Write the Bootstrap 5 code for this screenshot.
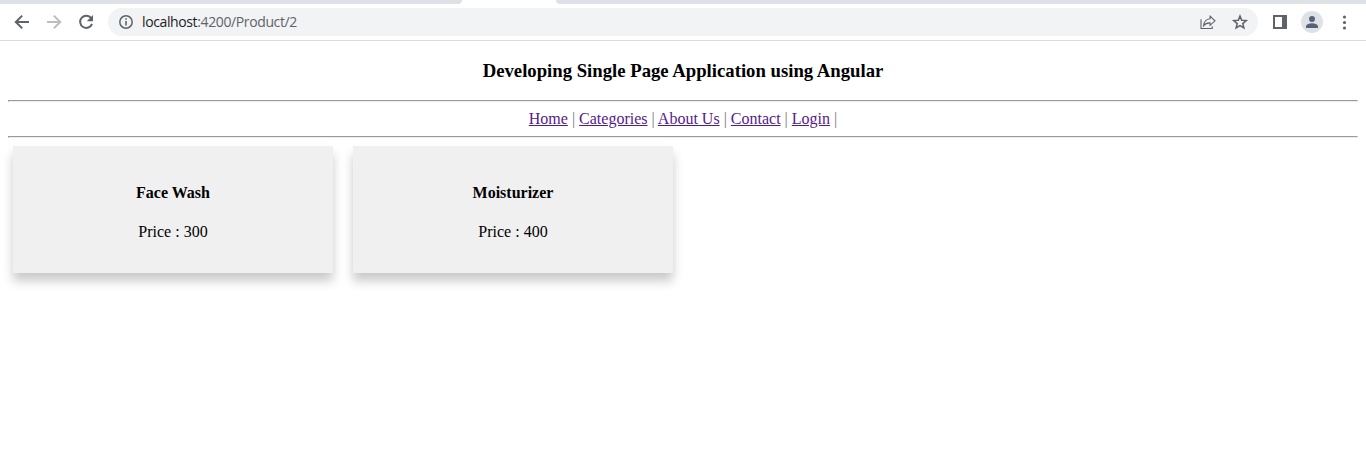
<!DOCTYPE html>
<html lang="en">
<head>
<meta charset="utf-8">
<meta name="viewport" content="width=device-width, initial-scale=1">
<title>Developing Single Page Application using Angular</title>
<link href="https://cdn.jsdelivr.net/npm/bootstrap@5.3.0/dist/css/bootstrap.min.css" rel="stylesheet">
<style>
  body { height: 460px; background: #fff; color: #000; font-family: "Liberation Serif", serif; font-size: 16px; line-height: 18px; }
  .tab-strip { height: 4px; }
  .tab-strip div { background: #dee1e6; }
  .tabs-before { width: 462px; border-bottom-right-radius: 4px; }
  .tabs-after { margin-left: 94px; border-bottom-left-radius: 4px; }
  .toolbar { height: 37px; border-bottom: 1px solid #dadce0; padding-left: 12px; padding-right: 12px; color: #5f6368; }
  .toolbar svg { display: block; flex: none; }
  .tool-nav { gap: 12px; width: 96px; }
  .address { height: 28px; width: 1150px; background: #f1f3f4; padding: 0 10px 0 8px; }
  .url { font: 14px/18px "Open Sans", sans-serif; letter-spacing: -.38px; color: #5f6368; margin-left: 6px; }
  .url span { color: #202124; }
  .star { margin: -2px; }
  .tool-end { margin-left: 12px; gap: 11px; }
  .page-body { padding: 0 8px; }
  .page-title { font-size: 18.72px; line-height: 21px; font-weight: 700; padding-top: 19px; margin: 0 0 19px; }
  .rule { height: 2px; border: 1px solid; border-color: #9a9a9a #eee #eee #9a9a9a; opacity: 1; margin: 0 0 8px; }
  .site-nav { height: 18px; margin-bottom: 8px; color: #777; }
  .site-nav a { color: #551a8b; }
  .products { gap: 20px; padding-left: 5px; }
  .product { width: 320px; height: 127px; padding: 38px 16px 16px; background: #f0f0f0; box-shadow: 0 8px 10px rgba(0,0,0,.21); }
  .product h4 { font-size: 16px; line-height: 18px; font-weight: 700; margin: 0 0 21px; }
</style>
</head>
<body class="overflow-hidden">
<header>
  <div class="tab-strip d-flex">
    <div class="tabs-before"></div>
    <div class="tabs-after flex-grow-1"></div>
  </div>
  <div class="toolbar d-flex align-items-center">
    <div class="tool-nav d-flex">
      <svg width="20" height="20" viewBox="0 0 20 20" fill="none" stroke="#5f6368" stroke-width="2"><path d="M17 10H4.5M10.2 3.6 3.8 10l6.4 6.4"/></svg>
      <svg width="20" height="20" viewBox="0 0 20 20" fill="none" stroke="#bbbdbf" stroke-width="2"><path d="M3 10h12.5M9.8 3.6l6.4 6.4-6.4 6.4"/></svg>
      <svg width="20" height="20" viewBox="0 0 20 20"><path d="M15.2 6.2A6.1 6.1 0 1 0 16 11.8" fill="none" stroke="#5f6368" stroke-width="2"/><path d="M17 3v6.2h-6.2z" fill="#5f6368"/></svg>
    </div>
    <div class="address rounded-pill d-flex align-items-center">
      <svg width="20" height="20" viewBox="0 0 20 20"><circle cx="10" cy="10" r="6.2" fill="none" stroke="#5f6368" stroke-width="1.5"/><path d="M9.2 6.2h1.6v1.6H9.2zM9.2 9.1h1.6v4.5H9.2z" fill="#5f6368"/></svg>
      <div class="url"><span>localhost</span>:4200/Product/2</div>
      <div class="d-flex ms-auto gap-3">
        <svg width="16" height="16" viewBox="0 0 16 16" fill="none" stroke="#5f6368" stroke-width="1.1"><path d="M1 5.2v9.3h11.2v-2.3"/><path d="M10.1 2.2 15 6.8l-4.9 4.5V8.9C7.5 8.8 5.2 9.6 3.6 11.6c.4-3.5 2.5-6.5 6.5-6.9z"/></svg>
        <svg class="star" width="20" height="20" viewBox="0 0 20 20" fill="none" stroke="#5f6368" stroke-width="1.5"><path d="m10 4 1.7 4.2 4.6.4-3.5 3 1.1 4.4L10 13.6 6.1 16l1.1-4.4-3.5-3 4.6-.4z"/></svg>
      </div>
    </div>
    <div class="tool-end d-flex align-items-center">
      <svg width="20" height="20" viewBox="0 0 20 20"><path fill="#5f6368" fill-rule="evenodd" d="M3 3h14v14H3zM5 5v10h7V5z"/></svg>
      <svg width="22" height="22" viewBox="0 0 22 22"><circle cx="11" cy="11" r="11" fill="#dee1e6"/><circle cx="11" cy="8" r="3" fill="#56617a"/><path d="M5 17v-1.5c0-2.2 3.8-3.3 6-3.3s6 1.1 6 3.3V17z" fill="#56617a"/></svg>
      <svg width="20" height="20" viewBox="0 0 20 20" fill="#5f6368"><circle cx="10.5" cy="5" r="1.6"/><circle cx="10.5" cy="10.5" r="1.6"/><circle cx="10.5" cy="16" r="1.6"/></svg>
    </div>
  </div>
</header>
<main class="page-body text-center">
  <h3 class="page-title">Developing Single Page Application using Angular</h3>
  <hr class="rule">
  <nav class="site-nav"><a href="#">Home</a> | <a href="#">Categories</a> | <a href="#">About Us</a> | <a href="#">Contact</a> | <a href="#">Login</a> |</nav>
  <hr class="rule">
  <div class="products d-flex">
    <section class="product"><h4>Face Wash</h4><p class="m-0">Price : 300</p></section>
    <section class="product"><h4>Moisturizer</h4><p class="m-0">Price : 400</p></section>
  </div>
</main>
<script src="https://cdn.jsdelivr.net/npm/bootstrap@5.3.0/dist/js/bootstrap.bundle.min.js"></script>
</body>
</html>
